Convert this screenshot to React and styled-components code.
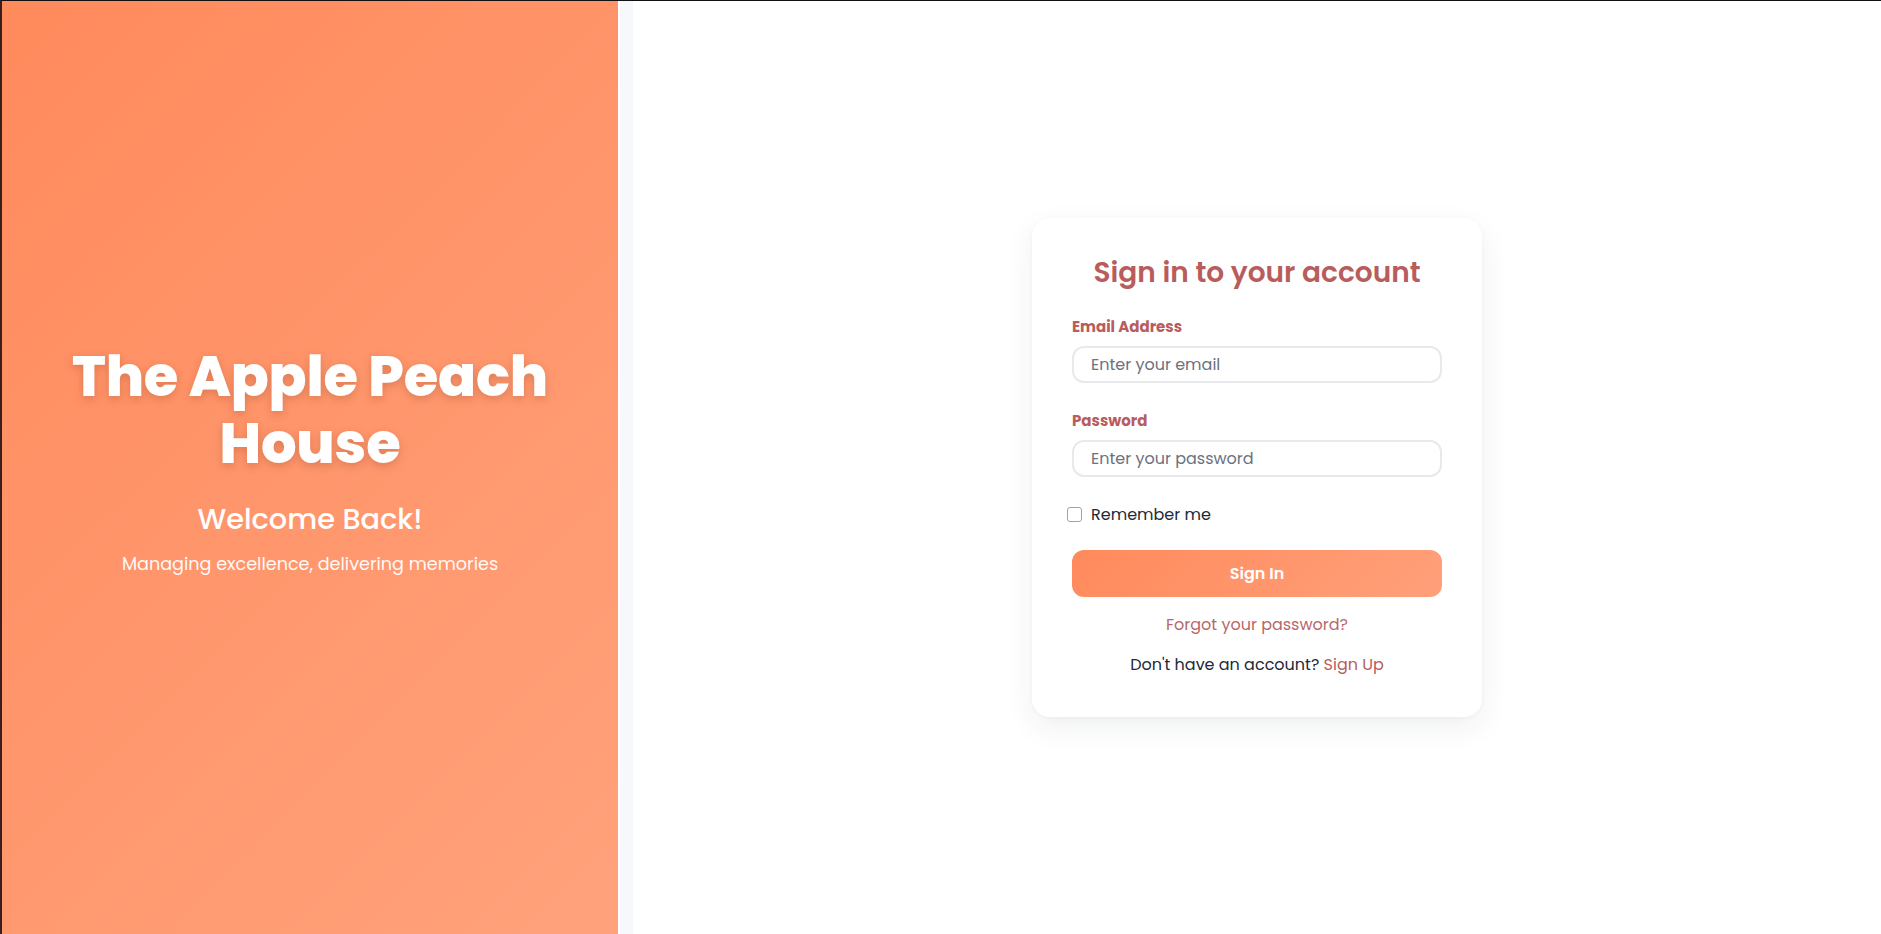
import styled, { createGlobalStyle } from 'styled-components';

const GlobalStyle = createGlobalStyle`
  html, body {
    margin: 0;
    padding: 0;
    background: #ffffff;
    font-family: 'Poppins', 'Inter', 'Noto Sans', sans-serif;
  }
  * {
    box-sizing: border-box;
  }
`;

const Page = styled.div`
  display: flex;
  height: 934px;
  border-top: 1px solid #111111;
  border-left: 2px solid #3a1e1c;
  overflow: hidden;
`;

const Hero = styled.section`
  width: 616px;
  flex-shrink: 0;
  display: flex;
  flex-direction: column;
  align-items: center;
  justify-content: center;
  padding: 0 40px 16px;
  background: linear-gradient(135deg, #ff8a5c 0%, #ffa27c 100%);
  color: #ffffff;
  text-align: center;
`;

const BrandTitle = styled.h1`
  margin: 0;
  font-size: 56px;
  line-height: 67px;
  font-weight: 800;
  letter-spacing: -0.2px;
  text-shadow: 0 3px 8px rgba(120, 50, 20, 0.25);
`;

const Welcome = styled.h2`
  margin: 25px 0 0;
  font-size: 28.8px;
  line-height: 35px;
  font-weight: 500;
`;

const Tagline = styled.p`
  margin: 15px 0 0;
  font-size: 17.6px;
  line-height: 25px;
  font-weight: 400;
  opacity: 0.95;
`;

const Main = styled.main`
  flex: 1;
  margin-left: 2px;
  border-left: 13px solid #f6f8fb;
  display: flex;
  align-items: center;
  justify-content: center;
  background: #ffffff;
`;

const Card = styled.div`
  width: 450px;
  padding: 38px 40px 40px;
  background: #ffffff;
  border-radius: 18px;
  box-shadow: 0 10px 30px rgba(30, 41, 59, 0.07), 0 1px 4px rgba(30, 41, 59, 0.04);
`;

const CardTitle = styled.h2`
  margin: 0 0 26px;
  text-align: center;
  font-size: 28px;
  line-height: 34px;
  font-weight: 600;
  color: #b85c5c;
`;

const Field = styled.div`
  display: flex;
  flex-direction: column;
  margin-bottom: ${(p) => p.$gap || 0}px;
`;

const Label = styled.label`
  font-size: 15px;
  line-height: 21px;
  font-weight: 700;
  color: #b85c5c;
  margin-bottom: 9px;
`;

const Input = styled.input`
  width: 100%;
  height: 37px;
  padding: 0 17px;
  border: 2px solid #e7e9ec;
  border-radius: 12px;
  font-family: inherit;
  font-size: 16px;
  color: #1f2937;
  outline: none;

  &::placeholder {
    color: #6b7280;
  }
`;

const RememberRow = styled.label`
  display: flex;
  align-items: center;
  gap: 9px;
  margin: 25px 0 0 -5px;
  height: 24px;
  font-size: 16px;
  color: #1f2937;
  cursor: pointer;
`;

const Checkbox = styled.input`
  width: 15px;
  height: 15px;
  margin: 0;
  appearance: none;
  border: 1.5px solid #9ca3af;
  border-radius: 3px;
  background: #ffffff;
`;

const SignInButton = styled.button`
  width: 100%;
  height: 47px;
  margin-top: 24px;
  border: none;
  border-radius: 12px;
  background: linear-gradient(135deg, #ff8a5c 0%, #ffa07a 100%);
  color: #ffffff;
  font-family: inherit;
  font-size: 16px;
  font-weight: 600;
  cursor: pointer;
`;

const Footer = styled.div`
  display: flex;
  flex-direction: column;
  align-items: center;
  gap: 16px;
  margin-top: 16px;
  font-size: 16px;
  line-height: 24px;
  color: #1f2937;
`;

const Link = styled.a`
  color: ${(p) => (p.$soft ? '#b9686a' : '#b85c5c')};
  text-decoration: none;
  cursor: pointer;
`;

export default function App() {
  return (
    <>
      <GlobalStyle />
      <Page>
        <Hero>
          <BrandTitle>The Apple Peach House</BrandTitle>
          <Welcome>Welcome Back!</Welcome>
          <Tagline>Managing excellence, delivering memories</Tagline>
        </Hero>
        <Main>
          <Card>
            <CardTitle>Sign in to your account</CardTitle>
            <Field $gap={27}>
              <Label htmlFor="email">Email Address</Label>
              <Input id="email" type="email" placeholder="Enter your email" />
            </Field>
            <Field>
              <Label htmlFor="password">Password</Label>
              <Input id="password" type="password" placeholder="Enter your password" />
            </Field>
            <RememberRow>
              <Checkbox type="checkbox" />
              Remember me
            </RememberRow>
            <SignInButton type="button">Sign In</SignInButton>
            <Footer>
              <Link $soft>Forgot your password?</Link>
              <div>
                Don't have an account? <Link>Sign Up</Link>
              </div>
            </Footer>
          </Card>
        </Main>
      </Page>
    </>
  );
}
